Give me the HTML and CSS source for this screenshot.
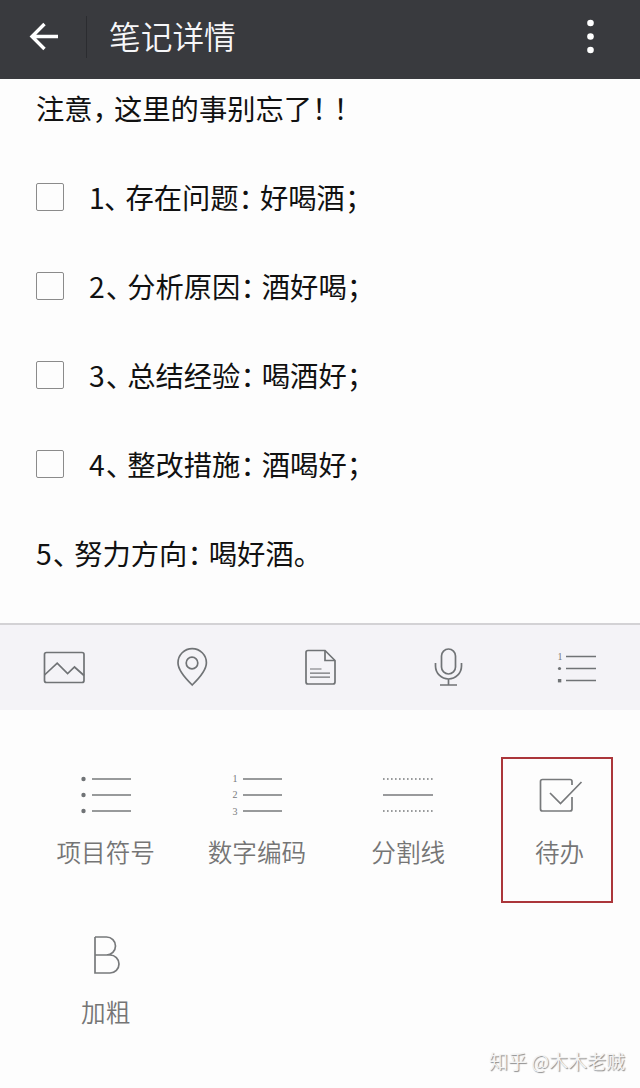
FILE: index.html
```html
<!DOCTYPE html>
<html lang="zh-CN">
<head>
  <meta charset="UTF-8" />
  <meta name="viewport" content="width=device-width, initial-scale=1.0"/>
  <title>笔记详情</title>
  <link rel="stylesheet" href="styles.css">
</head>
<body>

  <header class="topbar">
    <svg class="back" width="30" height="30" viewBox="0 0 30 30">
      <path d="M15.5 2 L3 14.5 L15.5 27 M3 14.5 H29"/>
    </svg>
    <h1>笔记详情</h1>
    <svg class="more" width="10" height="36" viewBox="0 0 10 36">
      <circle cx="5.500" cy="4" r="3.3"/>
      <circle cx="5.500" cy="17.500" r="3.3"/>
      <circle cx="5.500" cy="31" r="3.3"/>
    </svg>
  </header>

  <main class="note">
    <p>注意<i>，</i>这里的事别忘了<i>！</i><i>！</i></p>
    <p class="todo"><span class="box"></span><b class="one">1</b><i>、</i>存在问题<i>：</i>好喝酒<i>；</i></p>
    <p class="todo"><span class="box"></span><b>2</b><i>、</i>分析原因<i>：</i>酒好喝<i>；</i></p>
    <p class="todo"><span class="box"></span><b>3</b><i>、</i>总结经验<i>：</i>喝酒好<i>；</i></p>
    <p class="todo"><span class="box"></span><b>4</b><i>、</i>整改措施<i>：</i>酒喝好<i>；</i></p>
    <p><b>5</b><i>、</i>努力方向<i>：</i>喝好酒<i>。</i></p>
  </main>

  <nav class="toolbar">
    <!-- picture -->
    <svg width="44" height="44" viewBox="0 0 44 44">
      <rect x="2.5" y="7.5" width="39.5" height="30" rx="2"/>
      <path d="M2.5 30 L15.2 18.2 L25.6 28.5 L32.5 22 L42 30.5"/>
    </svg>
    <!-- location -->
    <svg width="44" height="44" viewBox="0 0 44 44">
      <path d="M22.2 40 C17 35 8 26 8 17.8 A14.2 14.2 0 0 1 36.4 17.8 C36.4 26 27.400 35 22.2 40 Z"/>
      <circle cx="22" cy="18" r="5.8"/>
    </svg>
    <!-- document -->
    <svg width="44" height="44" viewBox="0 0 44 44">
      <path d="M27 5.5 H10 Q8 5.5 8 7.5 V37 Q8 39 10 39 H35 Q37 39 37 37 V15.5 Z"/>
      <path d="M27 5.5 V15.5 H37"/>
      <path class="thin" d="M12 24 H23.5 M12 28.2 H32 M12 32.2 H32"/>
    </svg>
    <!-- microphone -->
    <svg width="44" height="44" viewBox="0 0 44 44">
      <rect x="15.5" y="4" width="14" height="25" rx="7"/>
      <path d="M9.5 18 V21 A13 13 0 0 0 35.5 21 V18 M22.5 34.5 V40 M14 40 H31"/>
    </svg>
    <!-- list -->
    <svg width="44" height="44" viewBox="0 0 44 44">
      <path d="M12 11.5 H42 M12 23.5 H42 M12 35.5 H42"/>
      <text x="3.5" y="14.5">1</text>
      <circle class="dot" cx="5.5" cy="23.5" r="1.6"/>
      <rect class="dot" x="3.900" y="34" width="3.4" height="3.4"/>
    </svg>
  </nav>

  <section class="panel">
    <div class="item">
      <svg width="60" height="60" viewBox="0 0 60 60">
        <path d="M16 14 H55 M16 30 H55 M16 46 H55"/>
        <circle class="dot" cx="7.5" cy="14" r="2.2"/>
        <circle class="dot" cx="7.5" cy="30" r="2.2"/>
        <circle class="dot" cx="7.5" cy="46" r="2.2"/>
      </svg>
      <span>项目符号</span>
    </div>
    <div class="item">
      <svg width="60" height="60" viewBox="0 0 60 60">
        <path d="M16 14 H55 M16 30 H55 M16 46 H55"/>
        <text x="5.5" y="17">1</text>
        <text x="5.5" y="33">2</text>
        <text x="5.5" y="49.5">3</text>
      </svg>
      <span>数字编码</span>
    </div>
    <div class="item">
      <svg width="60" height="60" viewBox="0 0 60 60">
        <path d="M5 30 H55"/>
        <path class="dotted" d="M5 14 H55 M5 46 H55"/>
      </svg>
      <span>分割线</span>
    </div>
    <div class="item marked">
      <svg width="60" height="60" viewBox="0 0 60 60">
        <path d="M42 20 V16.5 Q42 14.5 40 14.5 H12.5 Q10.5 14.5 10.5 16.5 V44 Q10.5 46 12.5 46 H40 Q42 46 42 44 V32"/>
        <path d="M20 28 L30.5 38.5 L51.5 17"/>
      </svg>
      <span>待办</span>
    </div>
    <div class="item">
      <svg width="60" height="60" viewBox="0 0 60 60">
        <path d="M19 12 H30.500 A9 9 0 0 1 30.500 30 H19 M30.500 30 H34 A9 9 0 0 1 34 48 H19 V12"/>
      </svg>
      <span>加粗</span>
    </div>
  </section>

  <footer class="credit">知乎 @木木老贼</footer>

</body>
</html>
```
FILE: styles.css
```css
body {
  margin: 0;
  height: 1088px;
  display: flex;
  flex-direction: column;
  position: relative;
  overflow: hidden;
  background: #fdfdfd;
  font-family: "Noto Sans CJK SC", sans-serif;
  color: #111;
}

svg {
  fill: none;
  stroke: #707376;
  stroke-width: 1.7;
}

svg text {
  fill: #77797c;
  stroke: none;
  font-family: "Liberation Serif", serif;
  font-size: 10px;
}

.dot {
  fill: #707376;
  stroke: none;
}

.topbar {
  height: 79px;
  box-sizing: border-box;
  padding: 0 45px 5px 29px;
  display: flex;
  align-items: center;
  background: #393a3e;
  color: #f7f7f9;
}

.back {
  stroke: #fff;
  stroke-width: 3.4;
}

.topbar h1 {
  margin: 0 auto 0 27px;
  padding: 0 0 4px 22px;
  border-left: 1px solid #2b2c30;
  font-size: 31.7px;
  line-height: 38px;
  font-weight: 350;
}

.more {
  fill: #fff;
  stroke: none;
}

.note {
  height: 544px;
  box-sizing: border-box;
  padding: 8px 36px 0;
}

.note p {
  display: flex;
  margin: 0 0 47px;
  height: 42px;
  line-height: 42px;
  font-size: 28.3px;
  white-space: nowrap;
}

/* punctuation is set narrower than a full square */
.note i {
  font-style: normal;
  letter-spacing: -6.9px;
}

.note b {
  width: 16.8px;
  font-weight: 400;
}

.note .one {
  width: 15px;
}

.box {
  width: 28px;
  height: 28px;
  box-sizing: border-box;
  margin: 7px 25px 0 0;
  border: 1.5px solid #8b8b8b;
  border-radius: 2px;
}

.toolbar {
  height: 87px;
  box-sizing: border-box;
  padding-bottom: 2px;
  border-top: 2px solid #d3d2d5;
  display: grid;
  grid-template-columns: repeat(5, 1fr);
  place-items: center;
  background: #f4f3f7;
}

.toolbar .thin {
  stroke-width: 1.2;
}

.panel {
  display: grid;
  grid-template-columns: repeat(4, 151.3px);
  grid-auto-rows: 160px;
  padding: 55px 0 0 30px;
}

.item {
  display: flex;
  flex-direction: column;
  align-items: center;
  position: relative;
}

.item svg {
  stroke: #77797b;
}

.item span {
  margin-top: 8px;
  font-size: 24.6px;
  line-height: 36px;
  color: #757575;
  font-weight: 350;
}

.item .dotted {
  stroke-dasharray: 1.6 2.4;
}

.marked::after {
  content: "";
  position: absolute;
  left: 17px;
  top: -8px;
  width: 108px;
  height: 142px;
  border: 2px solid #ab363a;
}

.credit {
  position: absolute;
  right: 15px;
  bottom: 14px;
  font-size: 19px;
  line-height: 26px;
  font-weight: 350;
  color: #f4f4f4;
  text-shadow: 1px 1px 1px #888;
}
```
